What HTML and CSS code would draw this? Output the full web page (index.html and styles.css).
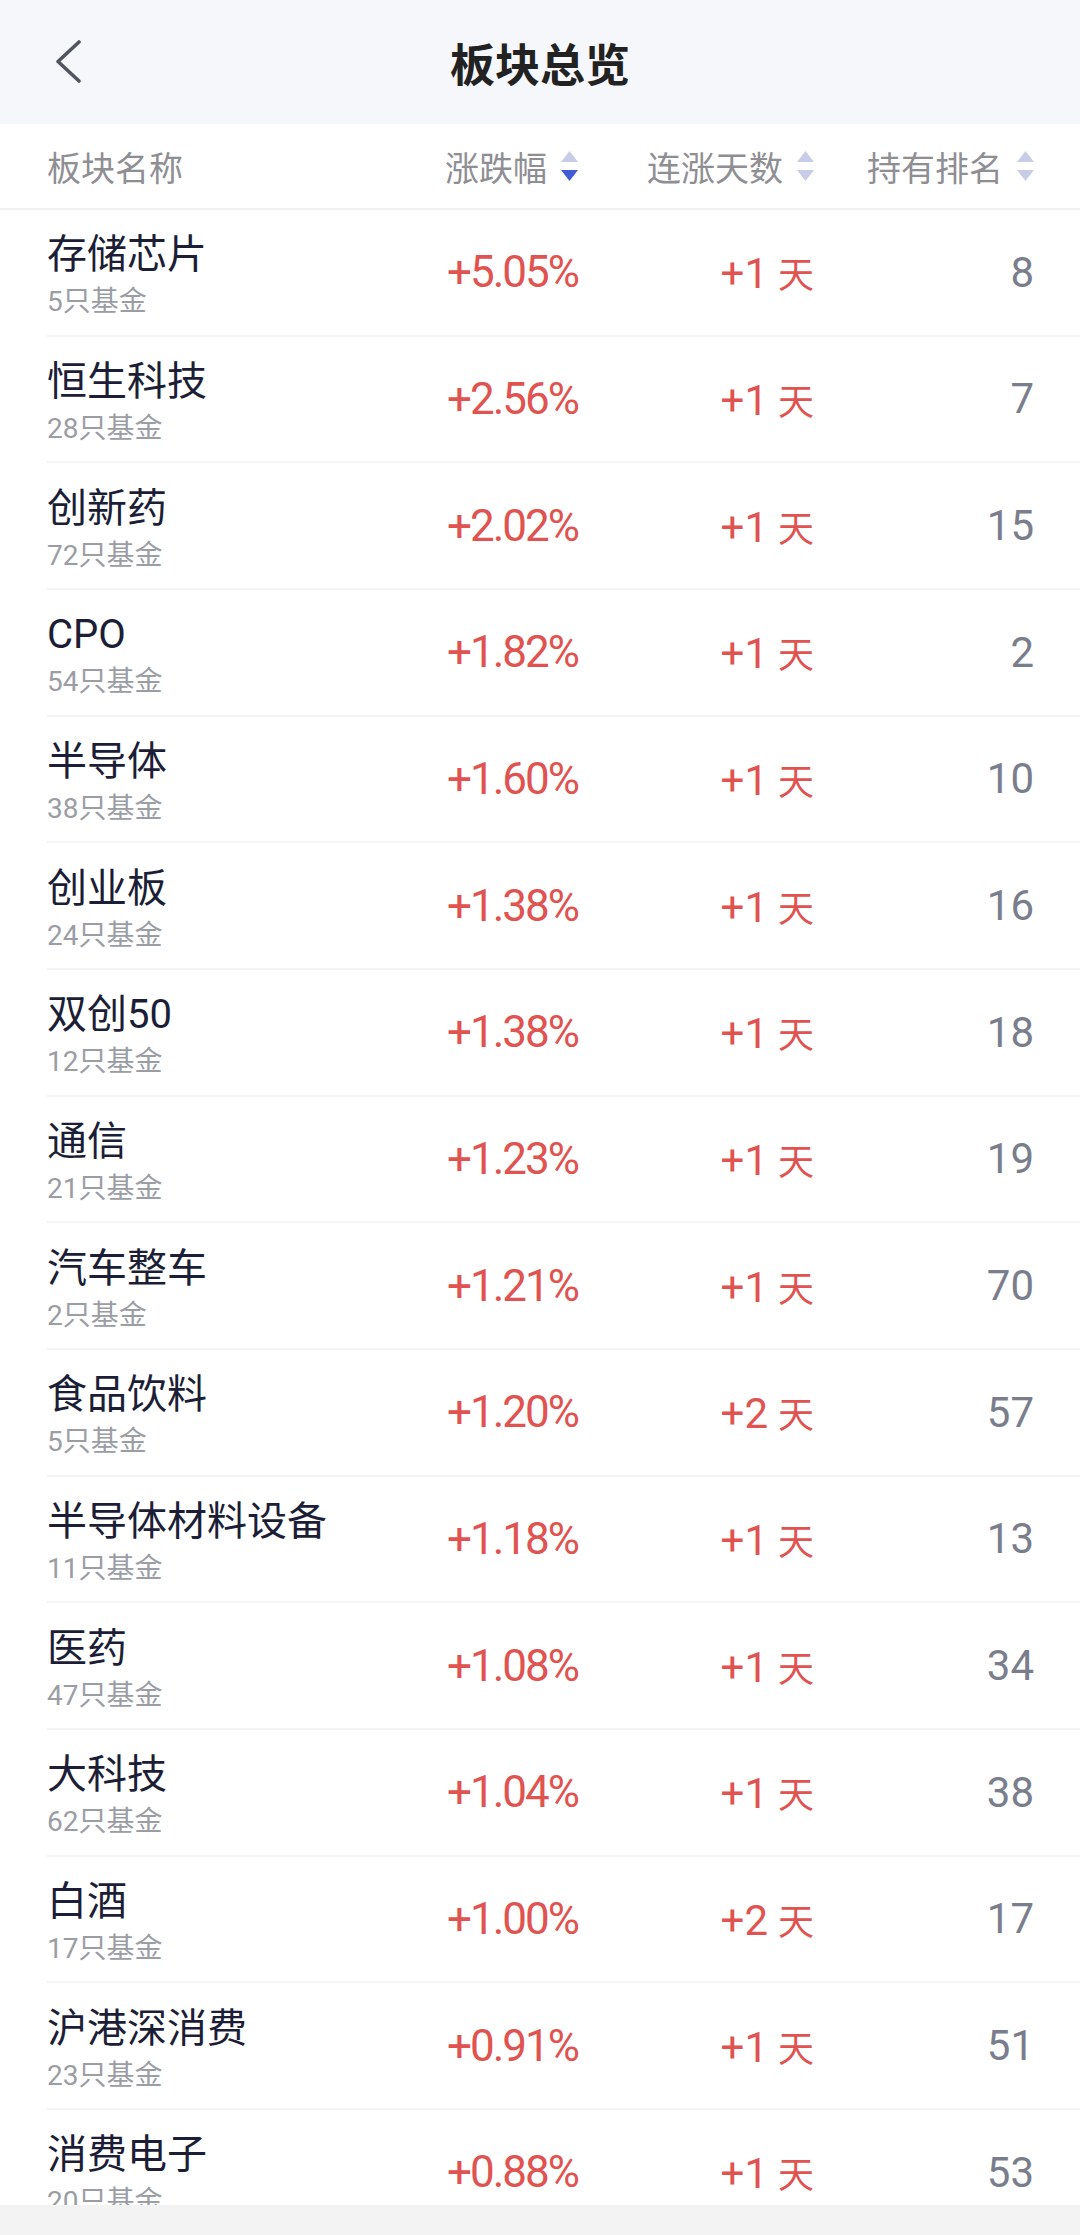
FILE: index.html
```html
<!DOCTYPE html>
<html lang="zh-CN">
<head>
    <meta charset="UTF-8">
    <meta name="viewport" content="width=device-width, initial-scale=1.0">
    <title>板块总览</title>
    <link rel="stylesheet" href="styles.css">
</head>
<body>
    <div class="topbar">
        <span class="back">
            <svg width="28" height="44" viewBox="0 0 28 44"><polyline points="24,2 3,21.5 24,41" fill="none" stroke="#51555f" stroke-width="3.6" stroke-linecap="round" stroke-linejoin="round"/></svg>
        </span>
        <h1>板块总览</h1>
    </div>

    <div class="list">
        <div class="thead">
            <div class="th th-name">板块名称</div>
            <div class="th">涨跌幅
                <svg class="sort" width="17" height="30" viewBox="0 0 17 30"><polygon points="8.5,0 17,11 0,11" fill="#c9cce6"/><polygon points="0,19 17,19 8.5,30" fill="#3f5bd8"/></svg>
            </div>
            <div class="th">连涨天数
                <svg class="sort" width="17" height="30" viewBox="0 0 17 30"><polygon points="8.5,0 17,11 0,11" fill="#c9cce6"/><polygon points="0,19 17,19 8.5,30" fill="#c9cce6"/></svg>
            </div>
            <div class="th">持有排名
                <svg class="sort" width="17" height="30" viewBox="0 0 17 30"><polygon points="8.5,0 17,11 0,11" fill="#c9cce6"/><polygon points="0,19 17,19 8.5,30" fill="#c9cce6"/></svg>
            </div>
        </div>

        <div class="row">
            <div class="name"><span class="title">存储芯片</span><span class="sub">5只基金</span></div>
            <div class="pct">+5.05%</div>
            <div class="days">+1<span>天</span></div>
            <div class="rank">8</div>
        </div>
        <div class="row">
            <div class="name"><span class="title">恒生科技</span><span class="sub">28只基金</span></div>
            <div class="pct">+2.56%</div>
            <div class="days">+1<span>天</span></div>
            <div class="rank">7</div>
        </div>
        <div class="row">
            <div class="name"><span class="title">创新药</span><span class="sub">72只基金</span></div>
            <div class="pct">+2.02%</div>
            <div class="days">+1<span>天</span></div>
            <div class="rank">15</div>
        </div>
        <div class="row">
            <div class="name"><span class="title">CPO</span><span class="sub">54只基金</span></div>
            <div class="pct">+1.82%</div>
            <div class="days">+1<span>天</span></div>
            <div class="rank">2</div>
        </div>
        <div class="row">
            <div class="name"><span class="title">半导体</span><span class="sub">38只基金</span></div>
            <div class="pct">+1.60%</div>
            <div class="days">+1<span>天</span></div>
            <div class="rank">10</div>
        </div>
        <div class="row">
            <div class="name"><span class="title">创业板</span><span class="sub">24只基金</span></div>
            <div class="pct">+1.38%</div>
            <div class="days">+1<span>天</span></div>
            <div class="rank">16</div>
        </div>
        <div class="row">
            <div class="name"><span class="title">双创50</span><span class="sub">12只基金</span></div>
            <div class="pct">+1.38%</div>
            <div class="days">+1<span>天</span></div>
            <div class="rank">18</div>
        </div>
        <div class="row">
            <div class="name"><span class="title">通信</span><span class="sub">21只基金</span></div>
            <div class="pct">+1.23%</div>
            <div class="days">+1<span>天</span></div>
            <div class="rank">19</div>
        </div>
        <div class="row">
            <div class="name"><span class="title">汽车整车</span><span class="sub">2只基金</span></div>
            <div class="pct">+1.21%</div>
            <div class="days">+1<span>天</span></div>
            <div class="rank">70</div>
        </div>
        <div class="row">
            <div class="name"><span class="title">食品饮料</span><span class="sub">5只基金</span></div>
            <div class="pct">+1.20%</div>
            <div class="days">+2<span>天</span></div>
            <div class="rank">57</div>
        </div>
        <div class="row">
            <div class="name"><span class="title">半导体材料设备</span><span class="sub">11只基金</span></div>
            <div class="pct">+1.18%</div>
            <div class="days">+1<span>天</span></div>
            <div class="rank">13</div>
        </div>
        <div class="row">
            <div class="name"><span class="title">医药</span><span class="sub">47只基金</span></div>
            <div class="pct">+1.08%</div>
            <div class="days">+1<span>天</span></div>
            <div class="rank">34</div>
        </div>
        <div class="row">
            <div class="name"><span class="title">大科技</span><span class="sub">62只基金</span></div>
            <div class="pct">+1.04%</div>
            <div class="days">+1<span>天</span></div>
            <div class="rank">38</div>
        </div>
        <div class="row">
            <div class="name"><span class="title">白酒</span><span class="sub">17只基金</span></div>
            <div class="pct">+1.00%</div>
            <div class="days">+2<span>天</span></div>
            <div class="rank">17</div>
        </div>
        <div class="row">
            <div class="name"><span class="title">沪港深消费</span><span class="sub">23只基金</span></div>
            <div class="pct">+0.91%</div>
            <div class="days">+1<span>天</span></div>
            <div class="rank">51</div>
        </div>
        <div class="row">
            <div class="name"><span class="title">消费电子</span><span class="sub">20只基金</span></div>
            <div class="pct">+0.88%</div>
            <div class="days">+1<span>天</span></div>
            <div class="rank">53</div>
        </div>
    </div>

    <div class="bottombar"></div>
</body>
</html>
```

FILE: styles.css
```css
body {
    margin: 0;
    width: 1080px;
    height: 2235px;
    overflow: hidden;
    background: #ffffff;
    font-family: Roboto, "Noto Sans CJK SC", sans-serif;
}
.topbar {
    height: 124px;
    background: #f6f7fb;
    display: flex;
    align-items: center;
    justify-content: center;
    position: relative;
}
.back {
    position: absolute;
    left: 55px;
    top: 40px;
    width: 28px;
    height: 44px;
}
.topbar h1 {
    margin: 0;
    font-size: 45px;
    font-weight: 700;
    color: #222222;
    font-family: "Noto Sans CJK SC", sans-serif;
}
.list {
    height: 2081px;
    overflow: hidden;
}
.thead {
    height: 84px;
    display: grid;
    grid-template-columns: 1fr 200px 236px 220px;
    align-items: center;
    padding: 0 46px 0 47px;
    border-bottom: 2px solid #f1f1f3;
}
.th {
    display: flex;
    align-items: center;
    justify-content: flex-end;
    gap: 14px;
    font-size: 34px;
    color: #8e8e93;
    font-family: "Noto Sans CJK SC", sans-serif;
}
.th-name {
    justify-content: flex-start;
}
.row {
    height: 126.67px;
    box-sizing: border-box;
    margin-left: 47px;
    padding-right: 46px;
    display: grid;
    grid-template-columns: 1fr 200px 236px 220px;
    align-items: center;
    border-bottom: 2px solid #f4f4f6;
}
.name {
    display: flex;
    flex-direction: column;
    padding-top: 6px;
}
.title {
    font-size: 40px;
    line-height: 50px;
    color: #1b1e36;
}
.sub {
    margin-top: 4px;
    font-size: 28px;
    line-height: 36px;
    color: #9b9da5;
}
.pct {
    text-align: right;
    font-size: 44px;
    letter-spacing: -2px;
    color: #e05350;
}
.days {
    text-align: right;
    font-size: 42px;
    color: #e05350;
}
.days span {
    margin-left: 10px;
    font-size: 36px;
    font-family: "Noto Sans CJK SC", sans-serif;
}
.rank {
    text-align: right;
    font-size: 42px;
    color: #7a7e8c;
}
.bottombar {
    height: 30px;
    background: #f3f3f3;
}
```
